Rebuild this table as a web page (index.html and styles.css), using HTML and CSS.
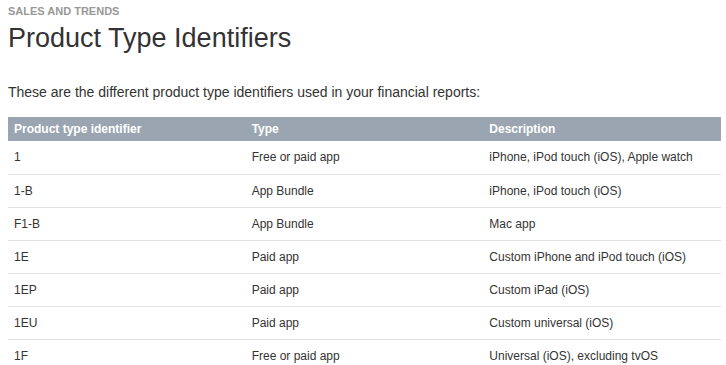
FILE: index.html
```html
<!DOCTYPE html>
<html>
<head>
<meta charset="utf-8">
<link rel="stylesheet" href="styles.css">
</head>
<body>
<div class="page">
  <div class="eyebrow">Sales and Trends</div>
  <h1 class="title">Product Type Identifiers</h1>
  <p class="intro">These are the different product type identifiers used in your financial reports:</p>
  <table class="ids">
    <thead>
      <tr><th>Product type identifier</th><th>Type</th><th>Description</th></tr>
    </thead>
    <tbody>
      <tr><td>1</td><td>Free or paid app</td><td>iPhone, iPod touch (iOS), Apple watch</td></tr>
      <tr><td>1-B</td><td>App Bundle</td><td>iPhone, iPod touch (iOS)</td></tr>
      <tr><td>F1-B</td><td>App Bundle</td><td>Mac app</td></tr>
      <tr><td>1E</td><td>Paid app</td><td>Custom iPhone and iPod touch (iOS)</td></tr>
      <tr><td>1EP</td><td>Paid app</td><td>Custom iPad (iOS)</td></tr>
      <tr><td>1EU</td><td>Paid app</td><td>Custom universal (iOS)</td></tr>
      <tr><td>1F</td><td>Free or paid app</td><td>Universal (iOS), excluding tvOS</td></tr>
    </tbody>
  </table>
</div>
</body>
</html>
```

FILE: styles.css
```css
html, body {
  margin: 0;
  padding: 0;
  background: #ffffff;
}
body {
  font-family: "Liberation Sans", Arial, sans-serif;
  color: #333333;
}
.page {
  padding: 0 5px 0 8px;
}
.eyebrow {
  font-size: 11px;
  font-weight: bold;
  color: #999999;
  text-transform: uppercase;
  line-height: 13px;
  padding-top: 5px;
}
.title {
  margin: 0;
  font-size: 27px;
  font-weight: normal;
  line-height: 32px;
  color: #333333;
  padding-top: 4px;
}
.intro {
  margin: 0;
  padding-top: 30px;
  font-size: 14px;
  line-height: 16px;
}
.ids {
  margin-top: 17px;
  width: 713px;
  border-collapse: collapse;
  table-layout: fixed;
  font-size: 12px;
}
.ids th {
  background: #9aa5b1;
  color: #ffffff;
  font-weight: bold;
  text-align: left;
  height: 24px;
  padding: 0 6px;
  box-sizing: border-box;
}
.ids td {
  height: 33px;
  padding: 0 6px;
  border-bottom: 1px solid #e2e2e2;
  box-sizing: border-box;
  vertical-align: middle;
}
```
